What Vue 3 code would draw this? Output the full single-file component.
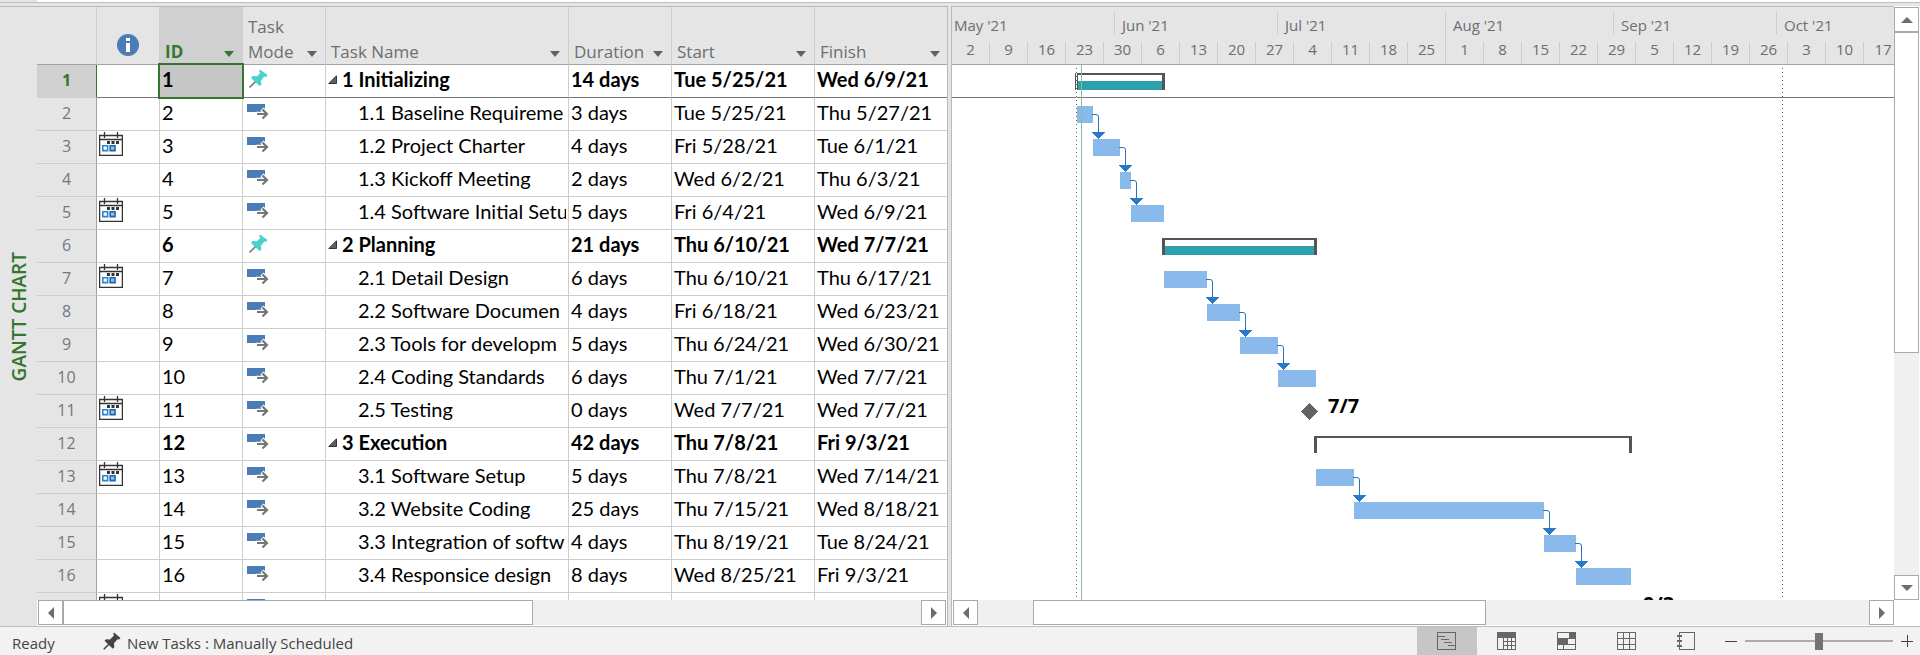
<script setup>
import { ref } from 'vue'

const PX_PER_DAY = 38 / 7
const ROW = 33
const x = (day) => Math.round(day * PX_PER_DAY)

const columns = [
  { key: 'id', label: 'ID', active: true },
  { key: 'mode', label: 'Task Mode' },
  { key: 'name', label: 'Task Name' },
  { key: 'duration', label: 'Duration' },
  { key: 'start', label: 'Start' },
  { key: 'finish', label: 'Finish' }
]

// "from" and "to" count days since Sunday 2 May 2021.
const tasks = [
  { id: 1, name: '1 Initializing', duration: '14 days', start: 'Tue 5/25/21', finish: 'Wed 6/9/21', summary: true, pin: true, filled: true, from: 23, to: 39 },
  { id: 2, name: '1.1 Baseline Requireme', duration: '3 days', start: 'Tue 5/25/21', finish: 'Thu 5/27/21', from: 23, to: 26, link: true },
  { id: 3, name: '1.2 Project Charter', duration: '4 days', start: 'Fri 5/28/21', finish: 'Tue 6/1/21', note: true, from: 26, to: 31, link: true },
  { id: 4, name: '1.3 Kickoff Meeting', duration: '2 days', start: 'Wed 6/2/21', finish: 'Thu 6/3/21', from: 31, to: 33, link: true },
  { id: 5, name: '1.4 Software Initial Setu', duration: '5 days', start: 'Fri 6/4/21', finish: 'Wed 6/9/21', note: true, from: 33, to: 39 },
  { id: 6, name: '2 Planning', duration: '21 days', start: 'Thu 6/10/21', finish: 'Wed 7/7/21', summary: true, pin: true, filled: true, from: 39, to: 67 },
  { id: 7, name: '2.1 Detail Design', duration: '6 days', start: 'Thu 6/10/21', finish: 'Thu 6/17/21', note: true, from: 39, to: 47, link: true },
  { id: 8, name: '2.2 Software Documen', duration: '4 days', start: 'Fri 6/18/21', finish: 'Wed 6/23/21', from: 47, to: 53, link: true },
  { id: 9, name: '2.3 Tools for developm', duration: '5 days', start: 'Thu 6/24/21', finish: 'Wed 6/30/21', from: 53, to: 60, link: true },
  { id: 10, name: '2.4 Coding Standards', duration: '6 days', start: 'Thu 7/1/21', finish: 'Wed 7/7/21', from: 60, to: 67 },
  { id: 11, name: '2.5 Testing', duration: '0 days', start: 'Wed 7/7/21', finish: 'Wed 7/7/21', note: true, milestone: '7/7', from: 66 },
  { id: 12, name: '3 Execution', duration: '42 days', start: 'Thu 7/8/21', finish: 'Fri 9/3/21', summary: true, from: 67, to: 125 },
  { id: 13, name: '3.1 Software Setup', duration: '5 days', start: 'Thu 7/8/21', finish: 'Wed 7/14/21', note: true, from: 67, to: 74, link: true },
  { id: 14, name: '3.2 Website Coding', duration: '25 days', start: 'Thu 7/15/21', finish: 'Wed 8/18/21', from: 74, to: 109, link: true },
  { id: 15, name: '3.3 Integration of softw', duration: '4 days', start: 'Thu 8/19/21', finish: 'Tue 8/24/21', from: 109, to: 115, link: true },
  { id: 16, name: '3.4 Responsice design', duration: '8 days', start: 'Wed 8/25/21', finish: 'Fri 9/3/21', from: 115, to: 125 },
  { id: '', name: '', duration: '', start: 'Fri 9/3/21', finish: 'Fri 9/3/21', note: true, milestone: '9/3', from: 124 }
]

const rows = tasks.map((t, i) => ({ ...t, key: i, y: i * ROW, x1: x(t.from), x2: x(t.to ?? t.from) }))
const summaries = rows.filter((r) => r.summary)
const bars = rows.filter((r) => !r.summary && !r.milestone)
const links = rows.filter((r) => r.link)
const milestones = rows.filter((r) => r.milestone)

const monthStarts = [
  ["May '21", 0], ["Jun '21", 30], ["Jul '21", 60], ["Aug '21", 91], ["Sep '21", 122], ["Oct '21", 152]
]
const months = monthStarts.map(([label, day], i) => ({
  label,
  joined: i === 2,
  width: i < 5 ? x(monthStarts[i + 1][1]) - x(day) : null
}))
const weeks = [2, 9, 16, 23, 30, 6, 13, 20, 27, 4, 11, 18, 25, 1, 8, 15, 22, 29, 5, 12, 19, 26, 3, 10, 17]

const views = ['Gantt Chart', 'Task Usage', 'Team Planner', 'Resource Sheet', 'Report']
const activeView = ref('Gantt Chart')
const zoom = ref(50)
</script>

<template>
  <div class="app">
    <div class="ribbon-edge"></div>
    <main class="workspace">
      <aside class="view-bar"><span>GANTT CHART</span></aside>

      <section class="grid-pane">
        <div class="grid-view">
          <table class="grid">
            <colgroup>
              <col class="c-num" /><col class="c-info" /><col class="c-id" /><col class="c-mode" />
              <col class="c-name" /><col class="c-dur" /><col class="c-start" /><col class="c-finish" />
            </colgroup>
            <thead>
              <tr>
                <th></th>
                <th>
                  <div class="info">
                    <svg width="22" height="22" viewBox="0 0 22 22" aria-label="Indicators">
                      <circle cx="11" cy="11" r="11" fill="#4a7db5" />
                      <rect x="9" y="4" width="4" height="3" fill="#fff" />
                      <rect x="9" y="9" width="4" height="9" fill="#fff" />
                    </svg>
                  </div>
                </th>
                <th v-for="c in columns" :key="c.key" :class="{ active: c.active }">
                  <div class="head">
                    <span>{{ c.label }}</span>
                    <button type="button" :aria-label="c.label + ' options'">
                      <svg width="10" height="6" viewBox="0 0 10 6"><path d="M0 0h10L5 6z" fill="currentColor" /></svg>
                    </button>
                  </div>
                </th>
              </tr>
            </thead>
            <tbody>
              <tr v-for="r in rows" :key="r.key" :class="{ summary: r.summary, selected: r.id === 1 }">
                <th scope="row">{{ r.id }}</th>
                <td class="note">
                  <svg v-if="r.note" width="24" height="24" viewBox="0 0 24 24">
                    <path d="M.6 3.500h22.800v19.800H.6zM.6 7.500h22.800M5.500 0v6M18.500 0v6" fill="none" stroke="#333" stroke-width="1.300" />
                    <path d="M8 9h3v3H8zM12.500 9h3v3h-3zM17 9h3v3h-3z" fill="#333" />
                    <path d="M3.800 13.800h4.800v4.800H3.800z" fill="#fff" stroke="#2b88d0" stroke-width="1.600" />
                    <path d="M11.200 13.800h4.800v4.800h-4.800z" fill="#8cc1ee" stroke="#1b66b0" stroke-width="1.600" />
                  </svg>
                </td>
                <td class="id">{{ r.id }}</td>
                <td class="mode">
                  <svg v-if="r.pin" width="22" height="20" viewBox="0 0 22 20">
                    <path d="M2.500 18.500l7-7" stroke="#777" stroke-width="1.600" />
                    <path d="M13 .5L20.500 6 19 8l-1.800-.5-3.400 4.500.7 3.500-2 1.500L4 9l1.500-2 4.500.3 3.200-3.300-1.200-2z" fill="#4bd0d0" />
                  </svg>
                  <svg v-else width="22" height="20" viewBox="0 0 22 20">
                    <path d="M0 2h18v8H0z" fill="#4a7db5" />
                    <path d="M9 12h11M15 7l5 5-5 5" fill="none" stroke="#fff" stroke-width="4.400" />
                    <path d="M10 12h10M15.500 7.500l4.500 4.500-4.500 4.500" fill="none" stroke="#767676" stroke-width="2.200" />
                  </svg>
                </td>
                <td class="name">
                  <div :class="{ child: !r.summary }">
                    <svg v-if="r.summary" width="9" height="9" viewBox="0 0 9 9"><path d="M8.500 .8v7.700H.8z" fill="#606060" stroke="#333" /></svg>
                    <span>{{ r.name }}</span>
                  </div>
                </td>
                <td>{{ r.duration }}</td>
                <td>{{ r.start }}</td>
                <td>{{ r.finish }}</td>
              </tr>
            </tbody>
          </table>
        </div>
        <div class="hbar">
          <button type="button" class="step" aria-label="Scroll table left">
            <svg width="6" height="12" viewBox="0 0 6 12"><path d="M6 0v12L0 6z" fill="#6d6d6d" /></svg>
          </button>
          <div class="track"><div class="thumb grid-thumb"></div></div>
          <button type="button" class="step" aria-label="Scroll table right">
            <svg width="6" height="12" viewBox="0 0 6 12"><path d="M0 0v12l6-6z" fill="#6d6d6d" /></svg>
          </button>
        </div>
      </section>

      <div class="splitter"></div>

      <section class="chart-pane">
        <div class="chart-col">
          <header class="timeline">
            <div class="months">
              <div v-for="m in months" :key="m.label" class="month" :class="{ joined: m.joined, last: !m.width }" :style="m.width ? { width: m.width + 'px' } : null">{{ m.label }}</div>
            </div>
            <div class="weeks">
              <div v-for="(w, i) in weeks" :key="i" class="week">{{ w }}</div>
            </div>
          </header>
          <div class="chart">
            <svg width="100%" height="100%" shape-rendering="crispEdges">
              <rect x="0" y="32" width="100%" height="1" fill="#777" />
              <g v-for="s in summaries" :key="'s' + s.key">
                <rect v-if="s.filled" :x="s.x1" :y="s.y + 16" :width="s.x2 - s.x1 - 2" height="9" fill="#2ca1ab" />
                <rect :x="s.x1 - 2" :y="s.y + 8" :width="s.x2 - s.x1 + 3" height="2" fill="#555" />
                <rect :x="s.x1 - 2" :y="s.y + 8" width="3" height="17" fill="#555" />
                <rect :x="s.x2 - 2" :y="s.y + 8" width="3" height="17" fill="#555" />
              </g>
              <rect v-for="b in bars" :key="'b' + b.key" :x="b.x1" :y="b.y + 8" :width="b.x2 - b.x1" height="17" fill="#8abaec" />
              <rect x="124" y="0" width="1" height="100%" fill="#fff" />
              <line x1="124.500" x2="124.500" y1="3" y2="100%" class="dots" />
              <line x1="830.500" x2="830.500" y1="3" y2="100%" class="dots" />
              <rect x="129" y="0" width="1" height="100%" fill="#86c090" />
              <g v-for="l in links" :key="'l' + l.key">
                <path :d="`M${l.x2 - 1} ${l.y + 16.5}h4q2.500 0 2.500 2.500v15`" fill="none" stroke="#2a72b8" shape-rendering="auto" />
                <path :d="`M${l.x2 - 1} ${l.y + 34}h13l-6.500 7z`" fill="#2878cc" />
              </g>
              <g v-for="m in milestones" :key="'m' + m.key">
                <path :d="`M${m.x1 - 0.5} ${m.y + 8}l8.500 8.500-8.500 8.500-8.500-8.500z`" fill="#646464" />
                <text :x="m.x1 + 18" :y="m.y + 18">{{ m.milestone }}</text>
              </g>
            </svg>
          </div>
          <div class="hbar chart-hbar">
            <button type="button" class="step" aria-label="Scroll chart left">
              <svg width="6" height="12" viewBox="0 0 6 12"><path d="M6 0v12L0 6z" fill="#6d6d6d" /></svg>
            </button>
            <div class="track"><div class="thumb chart-thumb"></div></div>
            <button type="button" class="step" aria-label="Scroll chart right">
              <svg width="6" height="12" viewBox="0 0 6 12"><path d="M0 0v12l6-6z" fill="#6d6d6d" /></svg>
            </button>
          </div>
        </div>
        <div class="vbar">
          <button type="button" class="step" aria-label="Scroll up">
            <svg width="12" height="6" viewBox="0 0 12 6"><path d="M0 6h12L6 0z" fill="#6d6d6d" /></svg>
          </button>
          <div class="track"><div class="thumb"></div></div>
          <button type="button" class="step" aria-label="Scroll down">
            <svg width="12" height="6" viewBox="0 0 12 6"><path d="M0 0h12L6 6z" fill="#6d6d6d" /></svg>
          </button>
        </div>
      </section>
    </main>

    <footer class="status">
      <span class="ready">Ready</span>
      <button type="button" class="new-tasks">
        <svg width="18" height="18" viewBox="0 0 18 18">
          <path d="M.8 17.200l6-6" stroke="#444" stroke-width="1.600" />
          <path d="M11 .5L17.500 6 16 7.500l-1.500-.3-3.500 4 .3 4L9.800 16.800 1.500 8.800 3 7.200l4 .2L11 3.500l-.8-1.700z" fill="#444" />
        </svg>
        <span>New Tasks : Manually Scheduled</span>
      </button>
      <nav class="views">
        <button v-for="(v, i) in views" :key="v" type="button" :aria-label="v" :class="{ on: v === activeView }" @click="activeView = v">
          <svg width="19" height="18" viewBox="0 0 19 18" fill="none" stroke="#666" shape-rendering="crispEdges">
            <path v-if="i === 0" d="M.5.5h18v17H.5zM1 4.500h7M4 7.500h8M7 10.500h8M11 13.500h8" />
            <template v-else-if="i === 1">
              <path d="M0 0h19v6H0z" fill="#666" stroke="none" />
              <path d="M.5.5h18v17H.5zM6.500 6v12M10.500 6v12M14.500 6v12M6 9.500h13M6 13.500h13" />
            </template>
            <template v-else-if="i === 2">
              <path d="M12 0h7v6h-7zM0 6h11v6H0z" fill="#666" stroke="none" />
              <path d="M.5.5h18v17H.5zM0 6.500h19M0 12.500h19M6.500 12v6" />
            </template>
            <path v-else-if="i === 3" d="M.5.5h18v17H.5zM6.500 0v18M12.500 0v18M0 6.500h19M0 12.500h19" />
            <template v-else>
              <path d="M2.500.5h15v17h-15z" />
              <path d="M0 4h5M0 9h5M0 14h5" stroke-width="2" />
            </template>
          </svg>
        </button>
      </nav>
      <div class="zoom">
        <button type="button" aria-label="Zoom out">
          <svg width="12" height="12" viewBox="0 0 12 12" shape-rendering="crispEdges"><path d="M0 6.500h12" stroke="#444" /></svg>
        </button>
        <input v-model="zoom" type="range" min="0" max="100" aria-label="Zoom" />
        <button type="button" aria-label="Zoom in">
          <svg width="12" height="12" viewBox="0 0 12 12" shape-rendering="crispEdges"><path d="M0 6.500h12M6.500 0v12" stroke="#444" /></svg>
        </button>
      </div>
    </footer>
  </div>
</template>

<style>
body { background: #e5e5e5; }
</style>

<style scoped>
.app {
  display: flex;
  flex-direction: column;
  height: 100vh;
  font-family: "Open Sans", "Noto Sans", sans-serif;
  color: #6b6e72;
  background: #e5e5e5;
}
.app *, .app *::after { box-sizing: border-box; }
button {
  display: flex;
  align-items: center;
  justify-content: center;
  padding: 0;
  border: 0;
  background: none;
  font: inherit;
  color: inherit;
}
svg { display: block; flex: none; }

.ribbon-edge {
  flex: none;
  height: 6px;
  background: linear-gradient(#bdbdbd, #bdbdbd) 0 2px / 100% 1px no-repeat, linear-gradient(#fff, #fff) 37px 0 / 100% 2px no-repeat;
}
.workspace { display: flex; flex: 1; min-height: 0; }

.view-bar {
  display: flex;
  flex: none;
  align-items: center;
  justify-content: center;
  width: 37px;
  border-top: 1px solid #b9b9b9;
}
.view-bar span {
  writing-mode: vertical-rl;
  transform: rotate(180deg);
  font-size: 19px;
  font-weight: 600;
  line-height: 26px;
  color: #33772f;
}

.grid-pane {
  display: flex;
  flex: none;
  flex-direction: column;
  width: 911px;
  border-top: 1px solid #b9b9b9;
  border-right: 1px solid #b9b9b9;
}
.grid-view { flex: 1; min-height: 0; overflow: hidden; }
.grid { width: 911px; table-layout: fixed; border-collapse: separate; border-spacing: 0; }
.c-num { width: 60px; }
.c-info { width: 63px; }
.c-id, .c-mode { width: 83px; }
.c-name { width: 243px; }
.c-dur { width: 103px; }
.c-start { width: 143px; }
.c-finish { width: 133px; }

thead th {
  height: 58px;
  padding: 0;
  border-right: 1px solid #cdcdcd;
  border-bottom: 1px solid #a3a3a3;
  vertical-align: bottom;
  text-align: left;
  font-size: 17px;
  font-weight: 400;
  line-height: 25px;
}
.head { display: flex; align-items: flex-end; justify-content: space-between; padding: 0 8px 0 5px; }
.head button { height: 6px; margin-bottom: 7px; color: #606366; }
.info { display: flex; justify-content: center; padding-bottom: 8px; }
thead .active { background: #d0d0d0; color: #33772f; font-weight: 700; }
.active button { color: #33772f; }

tbody th {
  height: 33px;
  padding: 0 0 2px;
  border-right: 1px solid #a3a3a3;
  border-bottom: 1px solid #cdcdcd;
  font-size: 16px;
  font-weight: 400;
  line-height: 30px;
  text-align: center;
  color: #74787c;
}
td {
  height: 33px;
  padding: 0 0 3px 2px;
  border-right: 1px solid #cdcdcd;
  border-bottom: 1px solid #cdcdcd;
  background: #fff;
  font-family: Lato, "Open Sans", sans-serif;
  font-size: 20px;
  line-height: 29px;
  color: #000;
  white-space: nowrap;
}
.summary td { font-weight: 700; }
tr > :last-child { border-right: 0; }
.selected td { border-bottom-color: #777; }
.selected th { border-right-color: #33772f; background: #d0d0d0; color: #33772f; font-weight: 700; }
.selected .id { position: relative; background: #c6c6c6; }
.selected .id::after { content: ""; position: absolute; inset: -2px; border: 2px solid #33772f; }
.note { padding: 0 0 6px 2px; }
.mode { padding: 0 0 4px 4px; }
.name div { display: flex; align-items: center; gap: 5px; margin-right: 2px; overflow: hidden; }
.name .child { padding-left: 30px; }

.hbar { display: flex; flex: none; height: 26px; padding: 0 1px 1px; background: #fff; }
.chart-hbar { padding-right: 0; }
.step { flex: none; width: 25px; height: 25px; border: 1px solid #a9a9a9; background: #fff; }
.track { flex: 1; background: #f0f0f0; }
.thumb { height: 100%; border: 1px solid #a9a9a9; background: #fff; }
.grid-thumb { width: 54.8%; }
.chart-thumb { width: 50.8%; margin-left: 6.2%; }

.splitter { flex: none; width: 3px; }

.chart-pane { display: flex; flex: 1; min-width: 0; border-left: 1px solid #b9b9b9; }
.chart-col { display: flex; flex: 1; flex-direction: column; min-width: 0; border-top: 1px solid #b9b9b9; }
.timeline {
  display: flex;
  flex: none;
  flex-direction: column;
  gap: 8px;
  padding-top: 5px;
  border-bottom: 1px solid #a3a3a3;
  overflow: hidden;
  font-size: 15px;
}
.months, .weeks { display: flex; height: 22px; white-space: nowrap; }
.month { position: relative; flex: none; padding-left: 7px; border-right: 1px solid #cdcdcd; line-height: 26px; }
.month:first-child { padding-left: 2px; }
.month.last { flex: 1; border: 0; }
.month.joined::after { content: ""; position: absolute; top: 22px; right: -1px; width: 1px; height: 8px; background: #cdcdcd; }
.week { flex: none; width: 38px; border-right: 1px solid #cdcdcd; text-align: center; line-height: 14px; }
.week:last-child { border: 0; }

.chart { flex: 1; min-height: 0; overflow: hidden; background: #fff; }
.chart text { font: 700 20px "Open Sans", sans-serif; fill: #000; }
.dots { stroke: #666; stroke-dasharray: 1 3; }

.vbar { display: flex; flex: none; flex-direction: column; width: 26px; padding: 1px 1px 26px 0; background: #fff; }
.vbar .thumb { height: 59.2%; }

.status {
  display: flex;
  flex: none;
  align-items: center;
  height: 29px;
  padding: 0 7px 0 12px;
  border-top: 1px solid #bdbdbd;
  background: #f2f2f2;
  font-size: 15px;
  line-height: 24px;
  color: #444;
}
.ready { width: 91px; padding-top: 3px; }
.new-tasks { gap: 6px; }
.new-tasks span { padding-top: 3px; }
.views { display: flex; align-self: stretch; margin-left: auto; }
.views button { width: 60px; padding-right: 2px; }
.views .on { background: #c6c6c6; }
.zoom { display: flex; align-items: center; gap: 8px; padding-left: 8px; }
input[type="range"] { width: 148px; height: 17px; margin: 0; appearance: none; background: linear-gradient(#acacac, #acacac) 0 50% / 100% 2px no-repeat; }
input[type="range"]::-webkit-slider-thumb { appearance: none; width: 8px; height: 17px; background: #737373; }
</style>
